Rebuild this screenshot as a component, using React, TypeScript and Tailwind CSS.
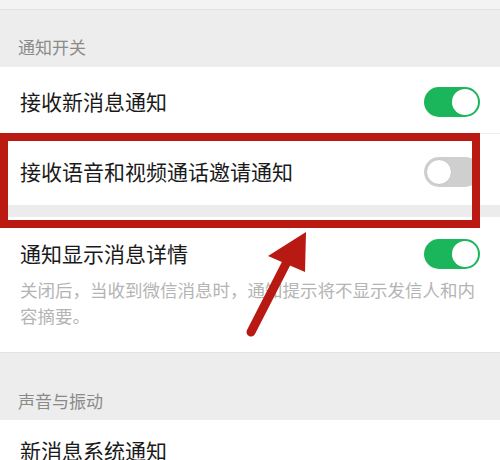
import React from 'react';

function Toggle({ on, className = '' }: { on: boolean; className?: string }) {
  return (
    <div
      className={`relative h-[30px] w-[56px] shrink-0 rounded-full ${
        on ? 'bg-[#1bb55c]' : 'bg-[#cfcfcf]'
      } ${className}`}
    >
      <div
        className={`absolute top-[2px] h-[26px] w-[26px] rounded-full bg-white ${
          on ? 'right-[2px]' : 'left-[2px] border border-[#c4c4c4]'
        }`}
      />
    </div>
  );
}

export default function App() {
  return (
    <div
      className="relative h-[460px] w-[500px] overflow-hidden bg-[#ededed]"
      style={{ fontFamily: '"Noto Sans CJK SC", "Noto Sans", sans-serif' }}
    >
      <div className="h-[10px] border-b border-[#e2e2e2] bg-[#f3f3f3]" />

      {/* 通知开关 */}
      <div className="flex h-[57px] items-end pb-[8px] pl-[18px] text-[17px] text-[#8a8a8a]">
        通知开关
      </div>

      <div className="bg-white">
        <div className="flex h-[66px] items-center justify-between pl-[20px] pr-[20px] pt-[4px] text-[21px] text-[#1a1a1a]">
          <span>接收新消息通知</span>
          <Toggle on />
        </div>
        <div className="ml-[20px] h-px bg-[#ececec]" />
        <div className="flex h-[71px] items-center justify-between pl-[20px] pr-[20px] text-[21px] text-[#1a1a1a]">
          <span className="pt-[4px]">接收语音和视频通话邀请通知</span>
          <Toggle on={false} className="mt-[4px]" />
        </div>
      </div>

      <div className="h-[12px] bg-[#ececec]" />

      <div className="bg-white pb-[23px] pl-[20px] pr-[20px] pt-[21px]">
        <div className="flex items-center justify-between text-[21px] text-[#1a1a1a]">
          <span>通知显示消息详情</span>
          <Toggle on />
        </div>
        <p className="mt-[7px] text-[17.5px] leading-[26px] text-[#b4b4b4]">
          关闭后，当收到微信消息时，通知提示将不显示发信人和内容摘要。
        </p>
      </div>

      {/* 声音与振动 */}
      <div className="flex h-[68px] items-end border-t border-[#e4e4e4] pb-[6px] pl-[18px] text-[17px] text-[#8a8a8a]">
        声音与振动
      </div>

      <div className="bg-white">
        <div className="flex h-[60px] items-center pl-[20px] pt-[2px] text-[21px] text-[#1a1a1a]">
          新消息系统通知
        </div>
      </div>

      {/* 标注框 */}
      <div className="absolute left-0 top-[133px] h-[95px] w-[480px] border-[8px] border-[#bb1a12]" />

      {/* 箭头 */}
      <svg className="absolute left-0 top-0" width="500" height="460" viewBox="0 0 500 460">
        <line x1="251" y1="332" x2="292" y2="252" stroke="#b81a13" strokeWidth="9" strokeLinecap="round" />
        <polygon points="306,232 268,256 305,272" fill="#b81a13" />
      </svg>
    </div>
  );
}
